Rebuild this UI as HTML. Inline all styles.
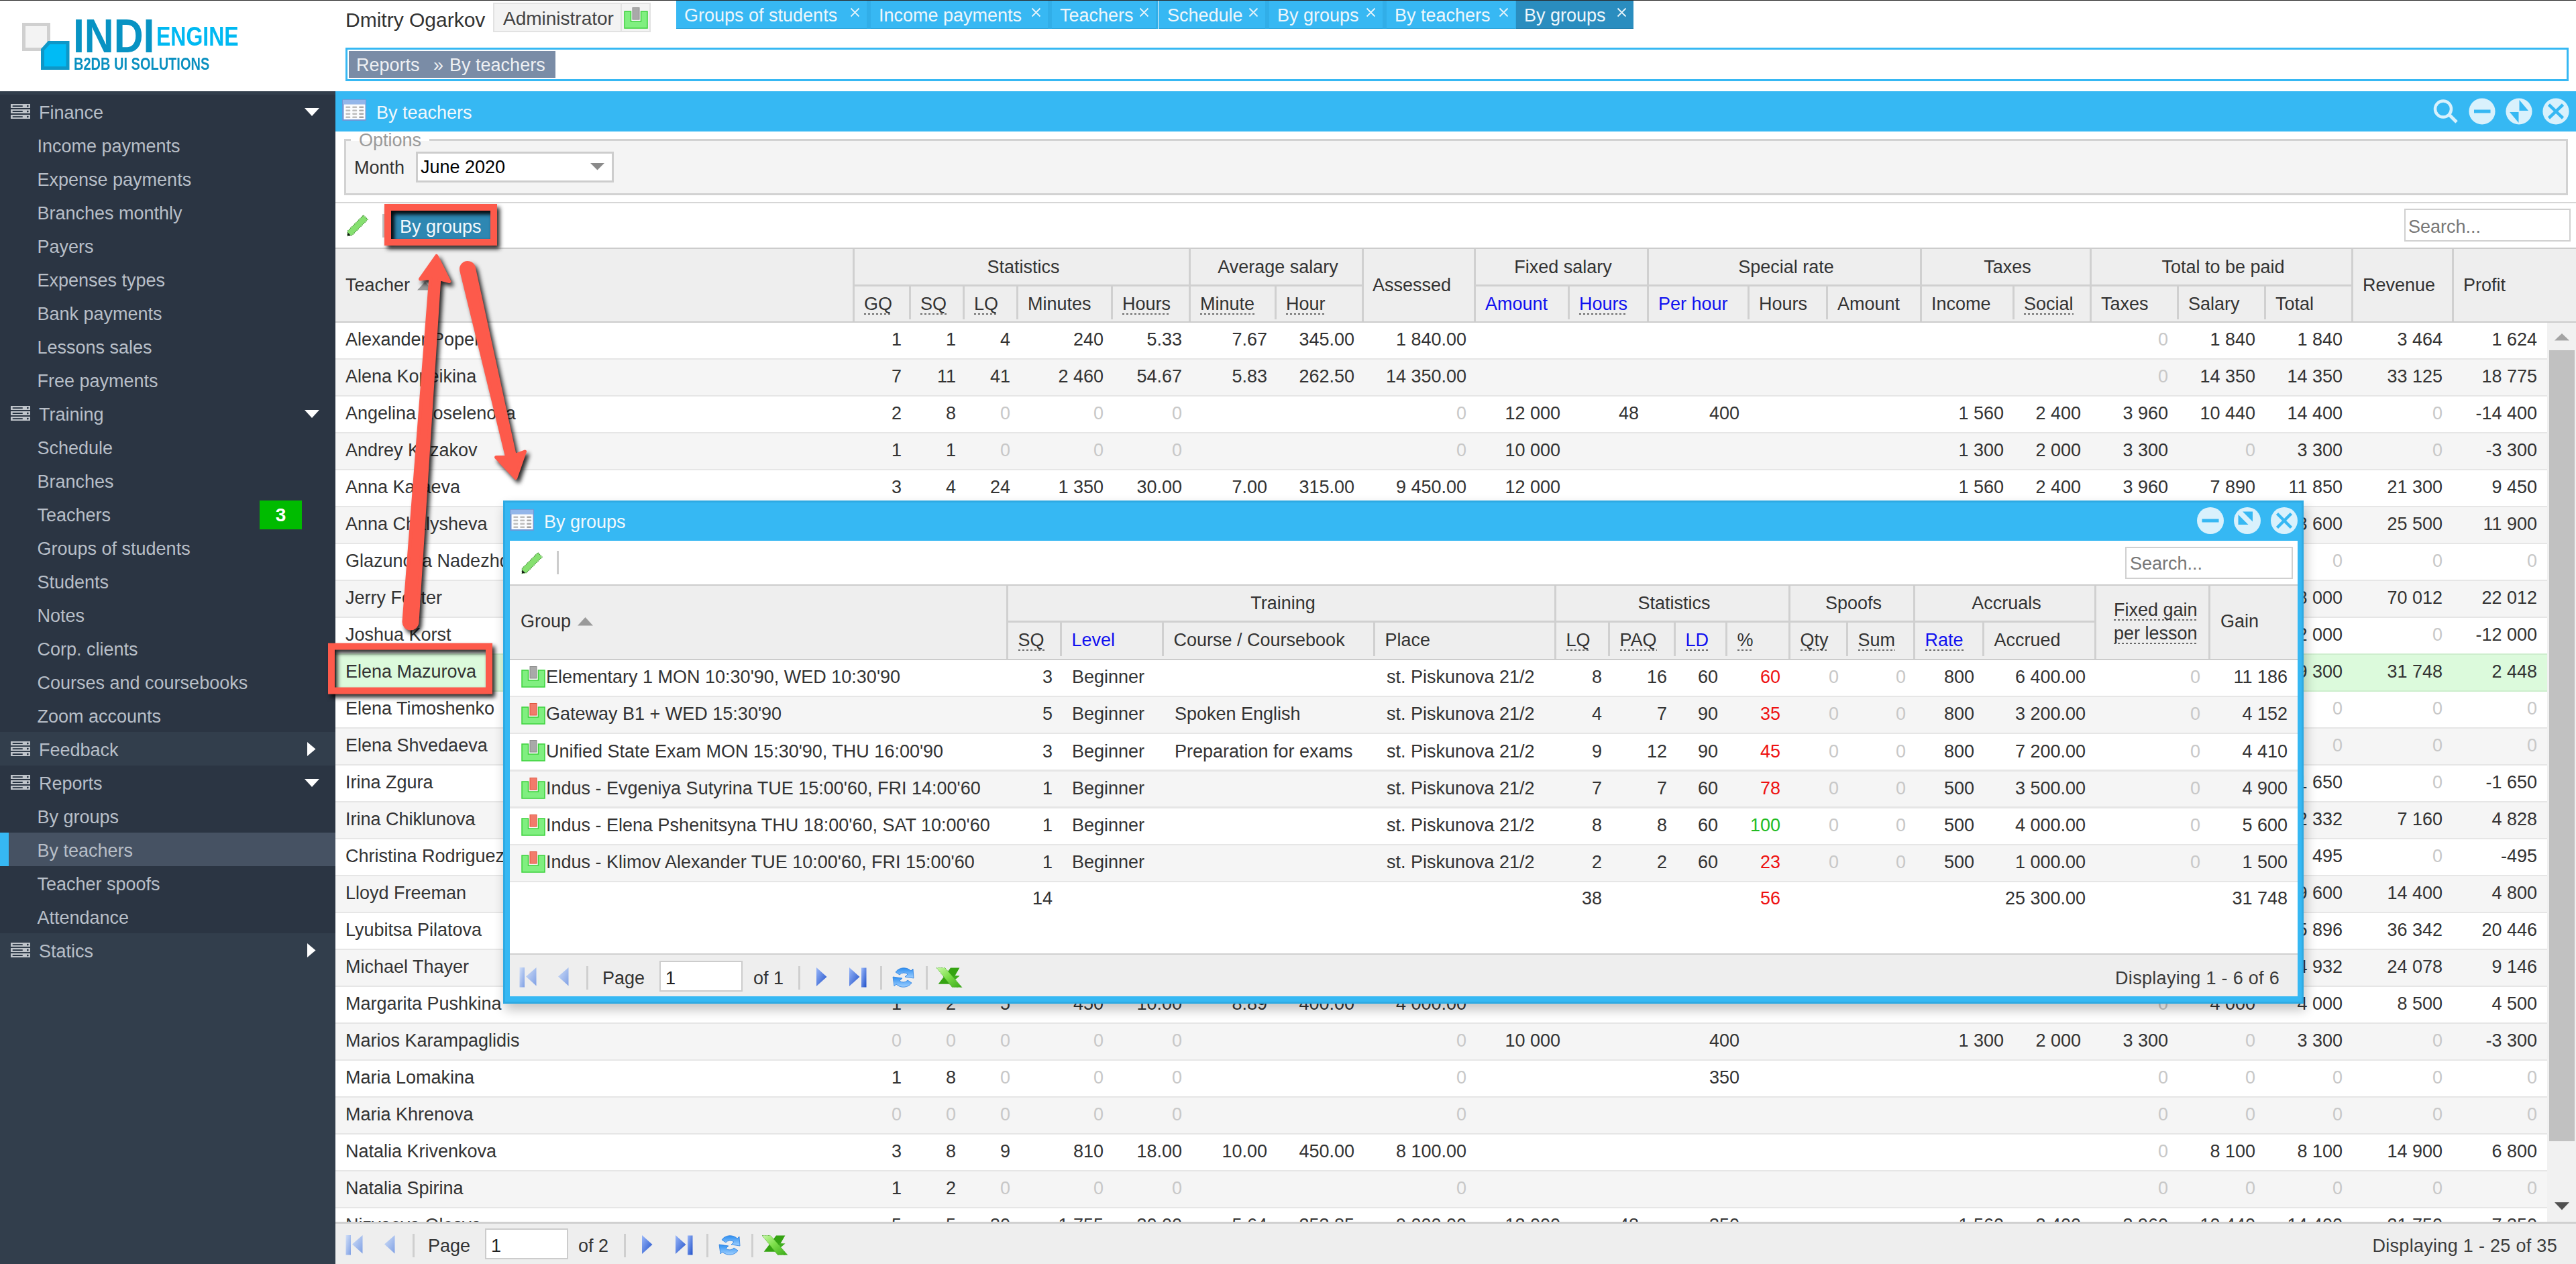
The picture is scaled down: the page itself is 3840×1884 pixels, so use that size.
<!DOCTYPE html><html><head><meta charset="utf-8"><style>
html,body{margin:0;padding:0;}
body{width:3840px;height:1884px;overflow:hidden;position:relative;background:#fff;font-family:"Liberation Sans", sans-serif;font-size:27px;color:#333;}
.t{position:absolute;white-space:pre;}
.b{position:absolute;box-sizing:border-box;}
.u{background:linear-gradient(90deg,#6a6a6a 50%,transparent 50%) 0 100%/6px 2px repeat-x;padding-bottom:0.5px;}
svg{position:absolute;overflow:visible;}
</style></head><body>
<div class="b" style="left:0px;top:0px;width:3840px;height:1px;background:#2a2a2a"></div>
<svg style="left:0;top:0" width="400" height="136">
<rect x="35.5" y="36.5" width="37" height="37" fill="#f3f3f3" stroke="#d0d0d0" stroke-width="5"/>
<path d="M63.5 104 V74 L73 63.5 H101 V101.5 H63.5 Z" fill="#00bbf5" stroke="#0e97c7" stroke-width="5"/>
</svg>
<div class="t" style="left:109px;top:18px;font-size:71px;line-height:71px;color:#0893c3;font-weight:bold;transform:scaleX(0.855);transform-origin:0 0">INDI</div>
<div class="t" style="left:233px;top:34px;font-size:41px;line-height:41px;color:#00b9f2;font-weight:bold;transform:scaleX(0.78);transform-origin:0 0">ENGINE</div>
<div class="t" style="left:110px;top:83px;font-size:25px;line-height:25px;color:#0a90c0;font-weight:bold;transform:scaleX(0.80);transform-origin:0 0">B2DB UI SOLUTIONS</div>
<div class="t " style="left:515px;top:14.6px;color:#333;font-size:30px;line-height:30px;">Dmitry Ogarkov</div>
<div class="b" style="left:735px;top:4px;width:235px;height:44px;background:#f3f3f3;border:2px solid #e2e2e2"></div>
<div class="b" style="left:925px;top:6px;width:2px;height:40px;background:#e2e2e2"></div>
<div class="t " style="left:750px;top:14.3px;color:#444;font-size:28px;line-height:28px;">Administrator</div>
<svg style="left:930px;top:10.5px" width="36" height="32" viewBox="0 0 36 32">
<path d="M1 6 H10.5 V21 H25.5 V6 H35 V31 H1 Z" fill="#80ef80" stroke="#3cd23c" stroke-width="1.5"/>
<rect x="13" y="0.5" width="10" height="17.5" fill="#a9a9a9" stroke="#8a8a8a" stroke-width="1"/>
</svg>
<div class="b" style="left:1008px;top:1px;width:284px;height:42px;background:#37b8f3;border-bottom:1px solid #2fa6dd"></div>
<div class="b" style="left:1292px;top:1px;width:6px;height:42px;background:#31aee8"></div>
<div class="t " style="left:1020px;top:10.1px;color:#eef6fb;font-size:27px;line-height:27px;">Groups of students</div>
<svg style="left:1267px;top:11px" width="15" height="15"><path d="M1.5 1.5 L13.5 13.5 M13.5 1.5 L1.5 13.5" stroke="#e6f4fb" stroke-width="1.8"/></svg>
<div class="b" style="left:1298px;top:1px;width:264px;height:42px;background:#37b8f3;border-bottom:1px solid #2fa6dd"></div>
<div class="b" style="left:1562px;top:1px;width:6px;height:42px;background:#31aee8"></div>
<div class="t " style="left:1310px;top:10.1px;color:#eef6fb;font-size:27px;line-height:27px;">Income payments</div>
<svg style="left:1537px;top:11px" width="15" height="15"><path d="M1.5 1.5 L13.5 13.5 M13.5 1.5 L1.5 13.5" stroke="#e6f4fb" stroke-width="1.8"/></svg>
<div class="b" style="left:1568px;top:1px;width:155px;height:42px;background:#37b8f3;border-bottom:1px solid #2fa6dd"></div>
<div class="b" style="left:1723px;top:1px;width:5px;height:42px;background:#31aee8"></div>
<div class="t " style="left:1580px;top:10.1px;color:#eef6fb;font-size:27px;line-height:27px;">Teachers</div>
<svg style="left:1698px;top:11px" width="15" height="15"><path d="M1.5 1.5 L13.5 13.5 M13.5 1.5 L1.5 13.5" stroke="#e6f4fb" stroke-width="1.8"/></svg>
<div class="b" style="left:1728px;top:1px;width:158px;height:42px;background:#37b8f3;border-bottom:1px solid #2fa6dd"></div>
<div class="b" style="left:1886px;top:1px;width:6px;height:42px;background:#31aee8"></div>
<div class="t " style="left:1740px;top:10.1px;color:#eef6fb;font-size:27px;line-height:27px;">Schedule</div>
<svg style="left:1861px;top:11px" width="15" height="15"><path d="M1.5 1.5 L13.5 13.5 M13.5 1.5 L1.5 13.5" stroke="#e6f4fb" stroke-width="1.8"/></svg>
<div class="b" style="left:1892px;top:1px;width:169px;height:42px;background:#37b8f3;border-bottom:1px solid #2fa6dd"></div>
<div class="b" style="left:2061px;top:1px;width:6px;height:42px;background:#31aee8"></div>
<div class="t " style="left:1904px;top:10.1px;color:#eef6fb;font-size:27px;line-height:27px;">By groups</div>
<svg style="left:2036px;top:11px" width="15" height="15"><path d="M1.5 1.5 L13.5 13.5 M13.5 1.5 L1.5 13.5" stroke="#e6f4fb" stroke-width="1.8"/></svg>
<div class="b" style="left:2067px;top:1px;width:192px;height:42px;background:#37b8f3;border-bottom:1px solid #2fa6dd"></div>
<div class="b" style="left:2259px;top:1px;width:1px;height:42px;background:#31aee8"></div>
<div class="t " style="left:2079px;top:10.1px;color:#eef6fb;font-size:27px;line-height:27px;">By teachers</div>
<svg style="left:2234px;top:11px" width="15" height="15"><path d="M1.5 1.5 L13.5 13.5 M13.5 1.5 L1.5 13.5" stroke="#e6f4fb" stroke-width="1.8"/></svg>
<div class="b" style="left:2260px;top:1px;width:175px;height:42px;background:#2a8dbf;border-bottom:1px solid #2680ae"></div>
<div class="t " style="left:2272px;top:10.1px;color:#eef6fb;font-size:27px;line-height:27px;">By groups</div>
<svg style="left:2410px;top:11px" width="15" height="15"><path d="M1.5 1.5 L13.5 13.5 M13.5 1.5 L1.5 13.5" stroke="#e6f4fb" stroke-width="1.8"/></svg>
<div class="b" style="left:1723px;top:1px;width:5px;height:42px;background:#31aee8"></div>
<div class="b" style="left:1726px;top:1px;width:1px;height:42px;background:#ffffff"></div>
<div class="b" style="left:515px;top:71px;width:3314px;height:50px;border:3px solid #36b8f3;background:#fff"></div>
<div class="b" style="left:520px;top:76px;width:308px;height:40px;background:#7a8ca6"></div>
<div class="t " style="left:531px;top:84.1px;color:#eef0f3;font-size:27px;line-height:27px;">Reports<span style="margin-left:20.5px">»</span><span style="margin-left:9px">By teachers</span></div>
<div class="b" style="left:0px;top:136px;width:500px;height:1748px;background:#323e4c"></div>
<div class="b" style="left:0px;top:141px;width:500px;height:450px;background:#2b3543"></div>
<div class="b" style="left:0px;top:591px;width:500px;height:500px;background:#2b3543"></div>
<div class="b" style="left:0px;top:1141px;width:500px;height:250px;background:#2b3543"></div>
<div class="b" style="left:0px;top:1241px;width:500px;height:50px;background:#465263"></div>
<div class="b" style="left:0px;top:1241px;width:13px;height:50px;background:#36b8f3"></div>
<svg style="left:16px;top:155px" width="29" height="22" viewBox="0 0 29 22">
<g fill="#bfc4ca"><rect x="0" y="0" width="29" height="6"/><rect x="0" y="8" width="29" height="6"/><rect x="0" y="16" width="29" height="6"/></g>
<g fill="#1c2939"><rect x="2.5" y="2.2" width="15.5" height="1.8" rx="0.9"/><rect x="2.5" y="10.2" width="15.5" height="1.8" rx="0.9"/><rect x="2.5" y="18.2" width="15.5" height="1.8" rx="0.9"/>
<circle cx="25.3" cy="3.1" r="1.4"/><circle cx="25.3" cy="11.1" r="1.4"/><circle cx="25.3" cy="19.1" r="1.4"/></g>
</svg>
<div class="t " style="left:58px;top:155.1px;color:#b8bfc8;font-size:27px;line-height:27px;">Finance</div>
<svg style="left:454px;top:161px" width="22" height="12"><path d="M0 0 H22 L11 12 Z" fill="#fff"/></svg>
<div class="t " style="left:55.5px;top:205.1px;color:#b8bfc8;font-size:27px;line-height:27px;">Income payments</div>
<div class="t " style="left:55.5px;top:255.1px;color:#b8bfc8;font-size:27px;line-height:27px;">Expense payments</div>
<div class="t " style="left:55.5px;top:305.1px;color:#b8bfc8;font-size:27px;line-height:27px;">Branches monthly</div>
<div class="t " style="left:55.5px;top:355.1px;color:#b8bfc8;font-size:27px;line-height:27px;">Payers</div>
<div class="t " style="left:55.5px;top:405.1px;color:#b8bfc8;font-size:27px;line-height:27px;">Expenses types</div>
<div class="t " style="left:55.5px;top:455.1px;color:#b8bfc8;font-size:27px;line-height:27px;">Bank payments</div>
<div class="t " style="left:55.5px;top:505.1px;color:#b8bfc8;font-size:27px;line-height:27px;">Lessons sales</div>
<div class="t " style="left:55.5px;top:555.1px;color:#b8bfc8;font-size:27px;line-height:27px;">Free payments</div>
<svg style="left:16px;top:605px" width="29" height="22" viewBox="0 0 29 22">
<g fill="#bfc4ca"><rect x="0" y="0" width="29" height="6"/><rect x="0" y="8" width="29" height="6"/><rect x="0" y="16" width="29" height="6"/></g>
<g fill="#1c2939"><rect x="2.5" y="2.2" width="15.5" height="1.8" rx="0.9"/><rect x="2.5" y="10.2" width="15.5" height="1.8" rx="0.9"/><rect x="2.5" y="18.2" width="15.5" height="1.8" rx="0.9"/>
<circle cx="25.3" cy="3.1" r="1.4"/><circle cx="25.3" cy="11.1" r="1.4"/><circle cx="25.3" cy="19.1" r="1.4"/></g>
</svg>
<div class="t " style="left:58px;top:605.1px;color:#b8bfc8;font-size:27px;line-height:27px;">Training</div>
<svg style="left:454px;top:611px" width="22" height="12"><path d="M0 0 H22 L11 12 Z" fill="#fff"/></svg>
<div class="t " style="left:55.5px;top:655.1px;color:#b8bfc8;font-size:27px;line-height:27px;">Schedule</div>
<div class="t " style="left:55.5px;top:705.1px;color:#b8bfc8;font-size:27px;line-height:27px;">Branches</div>
<div class="t " style="left:55.5px;top:755.1px;color:#b8bfc8;font-size:27px;line-height:27px;">Teachers</div>
<div class="b" style="left:387px;top:746px;width:63px;height:43px;background:#00bb00"></div>
<div class="t" style="left:387px;width:63px;text-align:center;top:751px;font-size:28px;line-height:33px;color:#fff;font-weight:bold">3</div>
<div class="t " style="left:55.5px;top:805.1px;color:#b8bfc8;font-size:27px;line-height:27px;">Groups of students</div>
<div class="t " style="left:55.5px;top:855.1px;color:#b8bfc8;font-size:27px;line-height:27px;">Students</div>
<div class="t " style="left:55.5px;top:905.1px;color:#b8bfc8;font-size:27px;line-height:27px;">Notes</div>
<div class="t " style="left:55.5px;top:955.1px;color:#b8bfc8;font-size:27px;line-height:27px;">Corp. clients</div>
<div class="t " style="left:55.5px;top:1005.1px;color:#b8bfc8;font-size:27px;line-height:27px;">Courses and coursebooks</div>
<div class="t " style="left:55.5px;top:1055.1px;color:#b8bfc8;font-size:27px;line-height:27px;">Zoom accounts</div>
<svg style="left:16px;top:1105px" width="29" height="22" viewBox="0 0 29 22">
<g fill="#bfc4ca"><rect x="0" y="0" width="29" height="6"/><rect x="0" y="8" width="29" height="6"/><rect x="0" y="16" width="29" height="6"/></g>
<g fill="#1c2939"><rect x="2.5" y="2.2" width="15.5" height="1.8" rx="0.9"/><rect x="2.5" y="10.2" width="15.5" height="1.8" rx="0.9"/><rect x="2.5" y="18.2" width="15.5" height="1.8" rx="0.9"/>
<circle cx="25.3" cy="3.1" r="1.4"/><circle cx="25.3" cy="11.1" r="1.4"/><circle cx="25.3" cy="19.1" r="1.4"/></g>
</svg>
<div class="t " style="left:58px;top:1105.1px;color:#b8bfc8;font-size:27px;line-height:27px;">Feedback</div>
<svg style="left:458px;top:1106px" width="13" height="21"><path d="M0 0 V21 L12.5 10.5 Z" fill="#fff"/></svg>
<svg style="left:16px;top:1155px" width="29" height="22" viewBox="0 0 29 22">
<g fill="#bfc4ca"><rect x="0" y="0" width="29" height="6"/><rect x="0" y="8" width="29" height="6"/><rect x="0" y="16" width="29" height="6"/></g>
<g fill="#1c2939"><rect x="2.5" y="2.2" width="15.5" height="1.8" rx="0.9"/><rect x="2.5" y="10.2" width="15.5" height="1.8" rx="0.9"/><rect x="2.5" y="18.2" width="15.5" height="1.8" rx="0.9"/>
<circle cx="25.3" cy="3.1" r="1.4"/><circle cx="25.3" cy="11.1" r="1.4"/><circle cx="25.3" cy="19.1" r="1.4"/></g>
</svg>
<div class="t " style="left:58px;top:1155.1px;color:#b8bfc8;font-size:27px;line-height:27px;">Reports</div>
<svg style="left:454px;top:1161px" width="22" height="12"><path d="M0 0 H22 L11 12 Z" fill="#fff"/></svg>
<div class="t " style="left:55.5px;top:1205.1px;color:#b8bfc8;font-size:27px;line-height:27px;">By groups</div>
<div class="t " style="left:55.5px;top:1255.1px;color:#b8bfc8;font-size:27px;line-height:27px;">By teachers</div>
<div class="t " style="left:55.5px;top:1305.1px;color:#b8bfc8;font-size:27px;line-height:27px;">Teacher spoofs</div>
<div class="t " style="left:55.5px;top:1355.1px;color:#b8bfc8;font-size:27px;line-height:27px;">Attendance</div>
<svg style="left:16px;top:1405px" width="29" height="22" viewBox="0 0 29 22">
<g fill="#bfc4ca"><rect x="0" y="0" width="29" height="6"/><rect x="0" y="8" width="29" height="6"/><rect x="0" y="16" width="29" height="6"/></g>
<g fill="#1c2939"><rect x="2.5" y="2.2" width="15.5" height="1.8" rx="0.9"/><rect x="2.5" y="10.2" width="15.5" height="1.8" rx="0.9"/><rect x="2.5" y="18.2" width="15.5" height="1.8" rx="0.9"/>
<circle cx="25.3" cy="3.1" r="1.4"/><circle cx="25.3" cy="11.1" r="1.4"/><circle cx="25.3" cy="19.1" r="1.4"/></g>
</svg>
<div class="t " style="left:58px;top:1405.1px;color:#b8bfc8;font-size:27px;line-height:27px;">Statics</div>
<svg style="left:458px;top:1406px" width="13" height="21"><path d="M0 0 V21 L12.5 10.5 Z" fill="#fff"/></svg>
<div class="b" style="left:500px;top:136px;width:3340px;height:60px;background:#36b8f3"></div>
<svg style="left:510px;top:148px" width="37" height="33" viewBox="0 0 37 33">
<rect x="0" y="0" width="36" height="32" rx="1" fill="#6f98d6"/>
<rect x="1" y="0.8" width="34" height="6.5" fill="#93b6ea"/>
<rect x="2.5" y="7.5" width="32" height="22.5" fill="#fbfcfe"/>
<g fill="#bdbdbd"><rect x="5.3" y="10.5" width="7" height="2.5" rx="1"/><rect x="15.2" y="10.5" width="7" height="2.5" rx="1"/><rect x="25.2" y="10.5" width="7" height="2.5" rx="1" fill="#aaa"/>
<rect x="5.3" y="15.4" width="7" height="2.5" rx="1"/><rect x="15.2" y="15.4" width="7" height="2.5" rx="1"/><rect x="25.2" y="15.4" width="7" height="2.5" rx="1" fill="#aaa"/>
<rect x="5.3" y="20.4" width="7" height="2.5" rx="1"/><rect x="15.2" y="20.4" width="7" height="2.5" rx="1"/><rect x="25.2" y="20.4" width="7" height="2.5" rx="1" fill="#aaa"/>
<rect x="5.3" y="25.4" width="7" height="2.5" rx="1"/><rect x="15.2" y="25.4" width="7" height="2.5" rx="1"/><rect x="25.2" y="25.4" width="7" height="2.5" rx="1" fill="#a0a0a0"/></g>
</svg>
<div class="t " style="left:561px;top:155.1px;color:#f2f8fc;font-size:27px;line-height:27px;">By teachers</div>
<svg style="left:3600px;top:136px" width="240" height="60">
<circle cx="42" cy="26.5" r="12" fill="none" stroke="#d9f1fc" stroke-width="4.5"/>
<path d="M51 35 L62 46" stroke="#d9f1fc" stroke-width="5" stroke-linecap="butt"/>
<circle cx="100" cy="30" r="19.6" fill="#d9f1fc"/><rect x="88" y="27.5" width="24.5" height="5" fill="#36b8f3"/>
<circle cx="155" cy="30" r="19.6" fill="#d9f1fc"/><path d="M145 8 V44 M140 0" stroke="none"/>
<path d="M155.5 13 V29 H169 Z" fill="#36b8f3"/><path d="M154.5 47 V31 H141 Z" fill="#36b8f3"/>
<circle cx="210" cy="30" r="19.6" fill="#d9f1fc"/><path d="M199.5 20 L220.5 40 M220.5 20 L199.5 40" stroke="#36b8f3" stroke-width="4.5"/>
</svg>
<div class="b" style="left:513px;top:207px;width:3315px;height:84px;background:#f4f4f4;border:3px solid #d2d2d2"></div>
<div class="b" style="left:523px;top:205px;width:117px;height:5px;background:#fff"></div>
<div class="t " style="left:535px;top:196.1px;color:#9a9a9a;font-size:27px;line-height:27px;">Options</div>
<div class="t " style="left:528px;top:237.1px;color:#333;font-size:27px;line-height:27px;">Month</div>
<div class="b" style="left:620px;top:226px;width:295px;height:46px;background:#fff;border:3px solid #cdcdcd"></div>
<div class="t " style="left:627px;top:236.1px;color:#000;font-size:27px;line-height:27px;">June 2020</div>
<svg style="left:880px;top:243px" width="21" height="11"><path d="M0 0 H21 L10.5 10.5 Z" fill="#8a8a8a"/></svg>
<div class="b" style="left:500px;top:301px;width:3340px;height:2px;background:#d6d6d6"></div>
<svg style="left:516px;top:320px" width="34" height="33" viewBox="0 0 34 33">
<path d="M25.8 0.8 L32.2 7.2 L8.7 30.7 L2 31.5 L2.3 24.3 Z" fill="#86e070" stroke="#4f9e40" stroke-width="1.3" stroke-dasharray="1.6 1.2" stroke-linejoin="round"/>
<path d="M2 31.6 L2.4 26.5 L6.8 31 Z" fill="#111"/>
</svg>
<div class="b" style="left:570px;top:319px;width:2.5px;height:35px;background:#c4c4c4"></div>
<div class="b" style="left:3584px;top:311px;width:248px;height:49px;background:#fff;border:2px solid #d0d0d0"></div>
<div class="t " style="left:3590px;top:325.1px;color:#777;font-size:27px;line-height:27px;">Search...</div>
<div class="b" style="left:500px;top:369px;width:3340px;height:2px;background:#cccccc"></div>
<div class="b" style="left:500px;top:371px;width:3340px;height:108px;background:#eeeeee"></div>
<div class="b" style="left:500px;top:479px;width:3340px;height:2px;background:#cccccc"></div>
<div class="b" style="left:1271px;top:371px;width:2.5px;height:108px;background:#d0d0d0"></div>
<div class="b" style="left:1772px;top:371px;width:2.5px;height:108px;background:#d0d0d0"></div>
<div class="b" style="left:2030px;top:371px;width:2.5px;height:108px;background:#d0d0d0"></div>
<div class="b" style="left:2197px;top:371px;width:2.5px;height:108px;background:#d0d0d0"></div>
<div class="b" style="left:2455px;top:371px;width:2.5px;height:108px;background:#d0d0d0"></div>
<div class="b" style="left:2862px;top:371px;width:2.5px;height:108px;background:#d0d0d0"></div>
<div class="b" style="left:3115px;top:371px;width:2.5px;height:108px;background:#d0d0d0"></div>
<div class="b" style="left:3505px;top:371px;width:2.5px;height:108px;background:#d0d0d0"></div>
<div class="b" style="left:3655px;top:371px;width:2.5px;height:108px;background:#d0d0d0"></div>
<div class="b" style="left:1355px;top:427px;width:2.5px;height:49px;background:#d0d0d0"></div>
<div class="b" style="left:1435px;top:427px;width:2.5px;height:49px;background:#d0d0d0"></div>
<div class="b" style="left:1515px;top:427px;width:2.5px;height:49px;background:#d0d0d0"></div>
<div class="b" style="left:1656px;top:427px;width:2.5px;height:49px;background:#d0d0d0"></div>
<div class="b" style="left:1900px;top:427px;width:2.5px;height:49px;background:#d0d0d0"></div>
<div class="b" style="left:2337px;top:427px;width:2.5px;height:49px;background:#d0d0d0"></div>
<div class="b" style="left:2605px;top:427px;width:2.5px;height:49px;background:#d0d0d0"></div>
<div class="b" style="left:2722px;top:427px;width:2.5px;height:49px;background:#d0d0d0"></div>
<div class="b" style="left:3000px;top:427px;width:2.5px;height:49px;background:#d0d0d0"></div>
<div class="b" style="left:3245px;top:427px;width:2.5px;height:49px;background:#d0d0d0"></div>
<div class="b" style="left:3375px;top:427px;width:2.5px;height:49px;background:#d0d0d0"></div>
<div class="b" style="left:1272px;top:424px;width:501px;height:3px;background:#d0d0d0"></div>
<div class="b" style="left:1773px;top:424px;width:258px;height:3px;background:#d0d0d0"></div>
<div class="b" style="left:2198px;top:424px;width:258px;height:3px;background:#d0d0d0"></div>
<div class="b" style="left:2456px;top:424px;width:407px;height:3px;background:#d0d0d0"></div>
<div class="b" style="left:2863px;top:424px;width:253px;height:3px;background:#d0d0d0"></div>
<div class="b" style="left:3116px;top:424px;width:390px;height:3px;background:#d0d0d0"></div>
<div class="t " style="left:515px;top:412.1px;color:#333;font-size:27px;line-height:27px;">Teacher</div>
<svg style="left:622px;top:420px" width="24" height="13"><path d="M0 12.5 H23 L11.5 0 Z" fill="#999"/></svg>
<div class="t" style="left:1225.5px;width:600px;text-align:center;top:385.1px;color:#333;font-size:27px;line-height:27px;">Statistics</div>
<div class="t" style="left:1605.0px;width:600px;text-align:center;top:385.1px;color:#333;font-size:27px;line-height:27px;">Average salary</div>
<div class="t" style="left:2030.0px;width:600px;text-align:center;top:385.1px;color:#333;font-size:27px;line-height:27px;">Fixed salary</div>
<div class="t" style="left:2362.5px;width:600px;text-align:center;top:385.1px;color:#333;font-size:27px;line-height:27px;">Special rate</div>
<div class="t" style="left:2692.5px;width:600px;text-align:center;top:385.1px;color:#333;font-size:27px;line-height:27px;">Taxes</div>
<div class="t" style="left:3014.0px;width:600px;text-align:center;top:385.1px;color:#333;font-size:27px;line-height:27px;">Total to be paid</div>
<div class="t " style="left:2046px;top:412.1px;color:#333;font-size:27px;line-height:27px;">Assessed</div>
<div class="t " style="left:3522px;top:412.1px;color:#333;font-size:27px;line-height:27px;">Revenue</div>
<div class="t " style="left:3672px;top:412.1px;color:#333;font-size:27px;line-height:27px;">Profit</div>
<div class="t " style="left:1288px;top:440.1px;color:#333;font-size:27px;line-height:27px;"><span class="u">GQ</span></div>
<div class="t " style="left:1372px;top:440.1px;color:#333;font-size:27px;line-height:27px;"><span class="u">SQ</span></div>
<div class="t " style="left:1452px;top:440.1px;color:#333;font-size:27px;line-height:27px;"><span class="u">LQ</span></div>
<div class="t " style="left:1532px;top:440.1px;color:#333;font-size:27px;line-height:27px;"><span class="">Minutes</span></div>
<div class="t " style="left:1673px;top:440.1px;color:#333;font-size:27px;line-height:27px;"><span class="u">Hours</span></div>
<div class="t " style="left:1789px;top:440.1px;color:#333;font-size:27px;line-height:27px;"><span class="u">Minute</span></div>
<div class="t " style="left:1917px;top:440.1px;color:#333;font-size:27px;line-height:27px;"><span class="u">Hour</span></div>
<div class="t " style="left:2214px;top:440.1px;color:#1010f0;font-size:27px;line-height:27px;"><span class="">Amount</span></div>
<div class="t " style="left:2354px;top:440.1px;color:#1010f0;font-size:27px;line-height:27px;"><span class="u">Hours</span></div>
<div class="t " style="left:2472px;top:440.1px;color:#1010f0;font-size:27px;line-height:27px;"><span class="">Per hour</span></div>
<div class="t " style="left:2622px;top:440.1px;color:#333;font-size:27px;line-height:27px;"><span class="">Hours</span></div>
<div class="t " style="left:2739px;top:440.1px;color:#333;font-size:27px;line-height:27px;"><span class="">Amount</span></div>
<div class="t " style="left:2879px;top:440.1px;color:#333;font-size:27px;line-height:27px;"><span class="">Income</span></div>
<div class="t " style="left:3017px;top:440.1px;color:#333;font-size:27px;line-height:27px;"><span class="u">Social</span></div>
<div class="t " style="left:3132px;top:440.1px;color:#333;font-size:27px;line-height:27px;"><span class="">Taxes</span></div>
<div class="t " style="left:3262px;top:440.1px;color:#333;font-size:27px;line-height:27px;"><span class="">Salary</span></div>
<div class="t " style="left:3392px;top:440.1px;color:#333;font-size:27px;line-height:27px;"><span class="">Total</span></div>
<div class="b" style="left:500px;top:481px;width:3297px;height:1340px;overflow:hidden">
<div class="b" style="left:0;top:0px;width:3297px;height:53px;background:#ffffff"></div>
<div class="b" style="left:0;top:52.6px;width:3297px;height:2.6px;background:#e6e6e6"></div>
<div class="t" style="left:15px;top:12.1px;line-height:27px">Alexander Popel</div>
<div class="t" style="right:2453px;top:12.1px;line-height:27px;color:#333">1</div>
<div class="t" style="right:2372px;top:12.1px;line-height:27px;color:#333">1</div>
<div class="t" style="right:2291px;top:12.1px;line-height:27px;color:#333">4</div>
<div class="t" style="right:2152px;top:12.1px;line-height:27px;color:#333">240</div>
<div class="t" style="right:2035px;top:12.1px;line-height:27px;color:#333">5.33</div>
<div class="t" style="right:1908px;top:12.1px;line-height:27px;color:#333">7.67</div>
<div class="t" style="right:1778px;top:12.1px;line-height:27px;color:#333">345.00</div>
<div class="t" style="right:1611px;top:12.1px;line-height:27px;color:#333">1 840.00</div>
<div class="t" style="right:565px;top:12.1px;line-height:27px;color:#c8c8c8">0</div>
<div class="t" style="right:435px;top:12.1px;line-height:27px;color:#333">1 840</div>
<div class="t" style="right:305px;top:12.1px;line-height:27px;color:#333">1 840</div>
<div class="t" style="right:156px;top:12.1px;line-height:27px;color:#333">3 464</div>
<div class="t" style="right:15px;top:12.1px;line-height:27px;color:#333">1 624</div>
<div class="b" style="left:0;top:55px;width:3297px;height:53px;background:#f5f5f5"></div>
<div class="b" style="left:0;top:107.6px;width:3297px;height:2.6px;background:#e6e6e6"></div>
<div class="t" style="left:15px;top:67.1px;line-height:27px">Alena Kopeikina</div>
<div class="t" style="right:2453px;top:67.1px;line-height:27px;color:#333">7</div>
<div class="t" style="right:2372px;top:67.1px;line-height:27px;color:#333">11</div>
<div class="t" style="right:2291px;top:67.1px;line-height:27px;color:#333">41</div>
<div class="t" style="right:2152px;top:67.1px;line-height:27px;color:#333">2 460</div>
<div class="t" style="right:2035px;top:67.1px;line-height:27px;color:#333">54.67</div>
<div class="t" style="right:1908px;top:67.1px;line-height:27px;color:#333">5.83</div>
<div class="t" style="right:1778px;top:67.1px;line-height:27px;color:#333">262.50</div>
<div class="t" style="right:1611px;top:67.1px;line-height:27px;color:#333">14 350.00</div>
<div class="t" style="right:565px;top:67.1px;line-height:27px;color:#c8c8c8">0</div>
<div class="t" style="right:435px;top:67.1px;line-height:27px;color:#333">14 350</div>
<div class="t" style="right:305px;top:67.1px;line-height:27px;color:#333">14 350</div>
<div class="t" style="right:156px;top:67.1px;line-height:27px;color:#333">33 125</div>
<div class="t" style="right:15px;top:67.1px;line-height:27px;color:#333">18 775</div>
<div class="b" style="left:0;top:110px;width:3297px;height:53px;background:#ffffff"></div>
<div class="b" style="left:0;top:162.6px;width:3297px;height:2.6px;background:#e6e6e6"></div>
<div class="t" style="left:15px;top:122.1px;line-height:27px">Angelina Koselenova</div>
<div class="t" style="right:2453px;top:122.1px;line-height:27px;color:#333">2</div>
<div class="t" style="right:2372px;top:122.1px;line-height:27px;color:#333">8</div>
<div class="t" style="right:2291px;top:122.1px;line-height:27px;color:#c8c8c8">0</div>
<div class="t" style="right:2152px;top:122.1px;line-height:27px;color:#c8c8c8">0</div>
<div class="t" style="right:2035px;top:122.1px;line-height:27px;color:#c8c8c8">0</div>
<div class="t" style="right:1611px;top:122.1px;line-height:27px;color:#c8c8c8">0</div>
<div class="t" style="right:1471px;top:122.1px;line-height:27px;color:#333">12 000</div>
<div class="t" style="right:1354px;top:122.1px;line-height:27px;color:#333">48</div>
<div class="t" style="right:1204px;top:122.1px;line-height:27px;color:#333">400</div>
<div class="t" style="right:810px;top:122.1px;line-height:27px;color:#333">1 560</div>
<div class="t" style="right:695px;top:122.1px;line-height:27px;color:#333">2 400</div>
<div class="t" style="right:565px;top:122.1px;line-height:27px;color:#333">3 960</div>
<div class="t" style="right:435px;top:122.1px;line-height:27px;color:#333">10 440</div>
<div class="t" style="right:305px;top:122.1px;line-height:27px;color:#333">14 400</div>
<div class="t" style="right:156px;top:122.1px;line-height:27px;color:#c8c8c8">0</div>
<div class="t" style="right:15px;top:122.1px;line-height:27px;color:#333">-14 400</div>
<div class="b" style="left:0;top:165px;width:3297px;height:53px;background:#f5f5f5"></div>
<div class="b" style="left:0;top:217.6px;width:3297px;height:2.6px;background:#e6e6e6"></div>
<div class="t" style="left:15px;top:177.1px;line-height:27px">Andrey Kozakov</div>
<div class="t" style="right:2453px;top:177.1px;line-height:27px;color:#333">1</div>
<div class="t" style="right:2372px;top:177.1px;line-height:27px;color:#333">1</div>
<div class="t" style="right:2291px;top:177.1px;line-height:27px;color:#c8c8c8">0</div>
<div class="t" style="right:2152px;top:177.1px;line-height:27px;color:#c8c8c8">0</div>
<div class="t" style="right:2035px;top:177.1px;line-height:27px;color:#c8c8c8">0</div>
<div class="t" style="right:1611px;top:177.1px;line-height:27px;color:#c8c8c8">0</div>
<div class="t" style="right:1471px;top:177.1px;line-height:27px;color:#333">10 000</div>
<div class="t" style="right:810px;top:177.1px;line-height:27px;color:#333">1 300</div>
<div class="t" style="right:695px;top:177.1px;line-height:27px;color:#333">2 000</div>
<div class="t" style="right:565px;top:177.1px;line-height:27px;color:#333">3 300</div>
<div class="t" style="right:435px;top:177.1px;line-height:27px;color:#c8c8c8">0</div>
<div class="t" style="right:305px;top:177.1px;line-height:27px;color:#333">3 300</div>
<div class="t" style="right:156px;top:177.1px;line-height:27px;color:#c8c8c8">0</div>
<div class="t" style="right:15px;top:177.1px;line-height:27px;color:#333">-3 300</div>
<div class="b" style="left:0;top:220px;width:3297px;height:53px;background:#ffffff"></div>
<div class="b" style="left:0;top:272.6px;width:3297px;height:2.6px;background:#e6e6e6"></div>
<div class="t" style="left:15px;top:232.1px;line-height:27px">Anna Karaeva</div>
<div class="t" style="right:2453px;top:232.1px;line-height:27px;color:#333">3</div>
<div class="t" style="right:2372px;top:232.1px;line-height:27px;color:#333">4</div>
<div class="t" style="right:2291px;top:232.1px;line-height:27px;color:#333">24</div>
<div class="t" style="right:2152px;top:232.1px;line-height:27px;color:#333">1 350</div>
<div class="t" style="right:2035px;top:232.1px;line-height:27px;color:#333">30.00</div>
<div class="t" style="right:1908px;top:232.1px;line-height:27px;color:#333">7.00</div>
<div class="t" style="right:1778px;top:232.1px;line-height:27px;color:#333">315.00</div>
<div class="t" style="right:1611px;top:232.1px;line-height:27px;color:#333">9 450.00</div>
<div class="t" style="right:1471px;top:232.1px;line-height:27px;color:#333">12 000</div>
<div class="t" style="right:810px;top:232.1px;line-height:27px;color:#333">1 560</div>
<div class="t" style="right:695px;top:232.1px;line-height:27px;color:#333">2 400</div>
<div class="t" style="right:565px;top:232.1px;line-height:27px;color:#333">3 960</div>
<div class="t" style="right:435px;top:232.1px;line-height:27px;color:#333">7 890</div>
<div class="t" style="right:305px;top:232.1px;line-height:27px;color:#333">11 850</div>
<div class="t" style="right:156px;top:232.1px;line-height:27px;color:#333">21 300</div>
<div class="t" style="right:15px;top:232.1px;line-height:27px;color:#333">9 450</div>
<div class="b" style="left:0;top:275px;width:3297px;height:53px;background:#f5f5f5"></div>
<div class="b" style="left:0;top:327.6px;width:3297px;height:2.6px;background:#e6e6e6"></div>
<div class="t" style="left:15px;top:287.1px;line-height:27px">Anna Chalysheva</div>
<div class="t" style="right:305px;top:287.1px;line-height:27px;color:#333">13 600</div>
<div class="t" style="right:156px;top:287.1px;line-height:27px;color:#333">25 500</div>
<div class="t" style="right:15px;top:287.1px;line-height:27px;color:#333">11 900</div>
<div class="b" style="left:0;top:330px;width:3297px;height:53px;background:#ffffff"></div>
<div class="b" style="left:0;top:382.6px;width:3297px;height:2.6px;background:#e6e6e6"></div>
<div class="t" style="left:15px;top:342.1px;line-height:27px">Glazunova Nadezhda</div>
<div class="t" style="right:305px;top:342.1px;line-height:27px;color:#c8c8c8">0</div>
<div class="t" style="right:156px;top:342.1px;line-height:27px;color:#c8c8c8">0</div>
<div class="t" style="right:15px;top:342.1px;line-height:27px;color:#c8c8c8">0</div>
<div class="b" style="left:0;top:385px;width:3297px;height:53px;background:#f5f5f5"></div>
<div class="b" style="left:0;top:437.6px;width:3297px;height:2.6px;background:#e6e6e6"></div>
<div class="t" style="left:15px;top:397.1px;line-height:27px">Jerry Foster</div>
<div class="t" style="right:305px;top:397.1px;line-height:27px;color:#333">48 000</div>
<div class="t" style="right:156px;top:397.1px;line-height:27px;color:#333">70 012</div>
<div class="t" style="right:15px;top:397.1px;line-height:27px;color:#333">22 012</div>
<div class="b" style="left:0;top:440px;width:3297px;height:53px;background:#ffffff"></div>
<div class="b" style="left:0;top:492.6px;width:3297px;height:2.6px;background:#cdeecd"></div>
<div class="t" style="left:15px;top:452.1px;line-height:27px">Joshua Korst</div>
<div class="t" style="right:305px;top:452.1px;line-height:27px;color:#333">12 000</div>
<div class="t" style="right:156px;top:452.1px;line-height:27px;color:#c8c8c8">0</div>
<div class="t" style="right:15px;top:452.1px;line-height:27px;color:#333">-12 000</div>
<div class="b" style="left:0;top:495px;width:3297px;height:53px;background:#dcfadc"></div>
<div class="b" style="left:0;top:547.6px;width:3297px;height:2.6px;background:#cdeecd"></div>
<div class="t" style="left:15px;top:507.1px;line-height:27px">Elena Mazurova</div>
<div class="t" style="right:305px;top:507.1px;line-height:27px;color:#333">29 300</div>
<div class="t" style="right:156px;top:507.1px;line-height:27px;color:#333">31 748</div>
<div class="t" style="right:15px;top:507.1px;line-height:27px;color:#333">2 448</div>
<div class="b" style="left:0;top:550px;width:3297px;height:53px;background:#ffffff"></div>
<div class="b" style="left:0;top:602.6px;width:3297px;height:2.6px;background:#e6e6e6"></div>
<div class="t" style="left:15px;top:562.1px;line-height:27px">Elena Timoshenko</div>
<div class="t" style="right:305px;top:562.1px;line-height:27px;color:#c8c8c8">0</div>
<div class="t" style="right:156px;top:562.1px;line-height:27px;color:#c8c8c8">0</div>
<div class="t" style="right:15px;top:562.1px;line-height:27px;color:#c8c8c8">0</div>
<div class="b" style="left:0;top:605px;width:3297px;height:53px;background:#f5f5f5"></div>
<div class="b" style="left:0;top:657.6px;width:3297px;height:2.6px;background:#e6e6e6"></div>
<div class="t" style="left:15px;top:617.1px;line-height:27px">Elena Shvedaeva</div>
<div class="t" style="right:305px;top:617.1px;line-height:27px;color:#c8c8c8">0</div>
<div class="t" style="right:156px;top:617.1px;line-height:27px;color:#c8c8c8">0</div>
<div class="t" style="right:15px;top:617.1px;line-height:27px;color:#c8c8c8">0</div>
<div class="b" style="left:0;top:660px;width:3297px;height:53px;background:#ffffff"></div>
<div class="b" style="left:0;top:712.6px;width:3297px;height:2.6px;background:#e6e6e6"></div>
<div class="t" style="left:15px;top:672.1px;line-height:27px">Irina Zgura</div>
<div class="t" style="right:305px;top:672.1px;line-height:27px;color:#333">1 650</div>
<div class="t" style="right:156px;top:672.1px;line-height:27px;color:#c8c8c8">0</div>
<div class="t" style="right:15px;top:672.1px;line-height:27px;color:#333">-1 650</div>
<div class="b" style="left:0;top:715px;width:3297px;height:53px;background:#f5f5f5"></div>
<div class="b" style="left:0;top:767.6px;width:3297px;height:2.6px;background:#e6e6e6"></div>
<div class="t" style="left:15px;top:727.1px;line-height:27px">Irina Chiklunova</div>
<div class="t" style="right:305px;top:727.1px;line-height:27px;color:#333">2 332</div>
<div class="t" style="right:156px;top:727.1px;line-height:27px;color:#333">7 160</div>
<div class="t" style="right:15px;top:727.1px;line-height:27px;color:#333">4 828</div>
<div class="b" style="left:0;top:770px;width:3297px;height:53px;background:#ffffff"></div>
<div class="b" style="left:0;top:822.6px;width:3297px;height:2.6px;background:#e6e6e6"></div>
<div class="t" style="left:15px;top:782.1px;line-height:27px">Christina Rodriguez</div>
<div class="t" style="right:305px;top:782.1px;line-height:27px;color:#333">495</div>
<div class="t" style="right:156px;top:782.1px;line-height:27px;color:#c8c8c8">0</div>
<div class="t" style="right:15px;top:782.1px;line-height:27px;color:#333">-495</div>
<div class="b" style="left:0;top:825px;width:3297px;height:53px;background:#f5f5f5"></div>
<div class="b" style="left:0;top:877.6px;width:3297px;height:2.6px;background:#e6e6e6"></div>
<div class="t" style="left:15px;top:837.1px;line-height:27px">Lloyd Freeman</div>
<div class="t" style="right:305px;top:837.1px;line-height:27px;color:#333">9 600</div>
<div class="t" style="right:156px;top:837.1px;line-height:27px;color:#333">14 400</div>
<div class="t" style="right:15px;top:837.1px;line-height:27px;color:#333">4 800</div>
<div class="b" style="left:0;top:880px;width:3297px;height:53px;background:#ffffff"></div>
<div class="b" style="left:0;top:932.6px;width:3297px;height:2.6px;background:#e6e6e6"></div>
<div class="t" style="left:15px;top:892.1px;line-height:27px">Lyubitsa Pilatova</div>
<div class="t" style="right:305px;top:892.1px;line-height:27px;color:#333">15 896</div>
<div class="t" style="right:156px;top:892.1px;line-height:27px;color:#333">36 342</div>
<div class="t" style="right:15px;top:892.1px;line-height:27px;color:#333">20 446</div>
<div class="b" style="left:0;top:935px;width:3297px;height:53px;background:#f5f5f5"></div>
<div class="b" style="left:0;top:987.6px;width:3297px;height:2.6px;background:#e6e6e6"></div>
<div class="t" style="left:15px;top:947.1px;line-height:27px">Michael Thayer</div>
<div class="t" style="right:305px;top:947.1px;line-height:27px;color:#333">14 932</div>
<div class="t" style="right:156px;top:947.1px;line-height:27px;color:#333">24 078</div>
<div class="t" style="right:15px;top:947.1px;line-height:27px;color:#333">9 146</div>
<div class="b" style="left:0;top:990px;width:3297px;height:53px;background:#ffffff"></div>
<div class="b" style="left:0;top:1042.6px;width:3297px;height:2.6px;background:#e6e6e6"></div>
<div class="t" style="left:15px;top:1002.1px;line-height:27px">Margarita Pushkina</div>
<div class="t" style="right:2453px;top:1002.1px;line-height:27px;color:#333">1</div>
<div class="t" style="right:2372px;top:1002.1px;line-height:27px;color:#333">2</div>
<div class="t" style="right:2291px;top:1002.1px;line-height:27px;color:#333">5</div>
<div class="t" style="right:2152px;top:1002.1px;line-height:27px;color:#333">450</div>
<div class="t" style="right:2035px;top:1002.1px;line-height:27px;color:#333">10.00</div>
<div class="t" style="right:1908px;top:1002.1px;line-height:27px;color:#333">8.89</div>
<div class="t" style="right:1778px;top:1002.1px;line-height:27px;color:#333">400.00</div>
<div class="t" style="right:1611px;top:1002.1px;line-height:27px;color:#333">4 000.00</div>
<div class="t" style="right:565px;top:1002.1px;line-height:27px;color:#c8c8c8">0</div>
<div class="t" style="right:435px;top:1002.1px;line-height:27px;color:#333">4 000</div>
<div class="t" style="right:305px;top:1002.1px;line-height:27px;color:#333">4 000</div>
<div class="t" style="right:156px;top:1002.1px;line-height:27px;color:#333">8 500</div>
<div class="t" style="right:15px;top:1002.1px;line-height:27px;color:#333">4 500</div>
<div class="b" style="left:0;top:1045px;width:3297px;height:53px;background:#f5f5f5"></div>
<div class="b" style="left:0;top:1097.6px;width:3297px;height:2.6px;background:#e6e6e6"></div>
<div class="t" style="left:15px;top:1057.1px;line-height:27px">Marios Karampaglidis</div>
<div class="t" style="right:2453px;top:1057.1px;line-height:27px;color:#c8c8c8">0</div>
<div class="t" style="right:2372px;top:1057.1px;line-height:27px;color:#c8c8c8">0</div>
<div class="t" style="right:2291px;top:1057.1px;line-height:27px;color:#c8c8c8">0</div>
<div class="t" style="right:2152px;top:1057.1px;line-height:27px;color:#c8c8c8">0</div>
<div class="t" style="right:2035px;top:1057.1px;line-height:27px;color:#c8c8c8">0</div>
<div class="t" style="right:1611px;top:1057.1px;line-height:27px;color:#c8c8c8">0</div>
<div class="t" style="right:1471px;top:1057.1px;line-height:27px;color:#333">10 000</div>
<div class="t" style="right:1204px;top:1057.1px;line-height:27px;color:#333">400</div>
<div class="t" style="right:810px;top:1057.1px;line-height:27px;color:#333">1 300</div>
<div class="t" style="right:695px;top:1057.1px;line-height:27px;color:#333">2 000</div>
<div class="t" style="right:565px;top:1057.1px;line-height:27px;color:#333">3 300</div>
<div class="t" style="right:435px;top:1057.1px;line-height:27px;color:#c8c8c8">0</div>
<div class="t" style="right:305px;top:1057.1px;line-height:27px;color:#333">3 300</div>
<div class="t" style="right:156px;top:1057.1px;line-height:27px;color:#c8c8c8">0</div>
<div class="t" style="right:15px;top:1057.1px;line-height:27px;color:#333">-3 300</div>
<div class="b" style="left:0;top:1100px;width:3297px;height:53px;background:#ffffff"></div>
<div class="b" style="left:0;top:1152.6px;width:3297px;height:2.6px;background:#e6e6e6"></div>
<div class="t" style="left:15px;top:1112.1px;line-height:27px">Maria Lomakina</div>
<div class="t" style="right:2453px;top:1112.1px;line-height:27px;color:#333">1</div>
<div class="t" style="right:2372px;top:1112.1px;line-height:27px;color:#333">8</div>
<div class="t" style="right:2291px;top:1112.1px;line-height:27px;color:#c8c8c8">0</div>
<div class="t" style="right:2152px;top:1112.1px;line-height:27px;color:#c8c8c8">0</div>
<div class="t" style="right:2035px;top:1112.1px;line-height:27px;color:#c8c8c8">0</div>
<div class="t" style="right:1611px;top:1112.1px;line-height:27px;color:#c8c8c8">0</div>
<div class="t" style="right:1204px;top:1112.1px;line-height:27px;color:#333">350</div>
<div class="t" style="right:565px;top:1112.1px;line-height:27px;color:#c8c8c8">0</div>
<div class="t" style="right:435px;top:1112.1px;line-height:27px;color:#c8c8c8">0</div>
<div class="t" style="right:305px;top:1112.1px;line-height:27px;color:#c8c8c8">0</div>
<div class="t" style="right:156px;top:1112.1px;line-height:27px;color:#c8c8c8">0</div>
<div class="t" style="right:15px;top:1112.1px;line-height:27px;color:#c8c8c8">0</div>
<div class="b" style="left:0;top:1155px;width:3297px;height:53px;background:#f5f5f5"></div>
<div class="b" style="left:0;top:1207.6px;width:3297px;height:2.6px;background:#e6e6e6"></div>
<div class="t" style="left:15px;top:1167.1px;line-height:27px">Maria Khrenova</div>
<div class="t" style="right:2453px;top:1167.1px;line-height:27px;color:#c8c8c8">0</div>
<div class="t" style="right:2372px;top:1167.1px;line-height:27px;color:#c8c8c8">0</div>
<div class="t" style="right:2291px;top:1167.1px;line-height:27px;color:#c8c8c8">0</div>
<div class="t" style="right:2152px;top:1167.1px;line-height:27px;color:#c8c8c8">0</div>
<div class="t" style="right:2035px;top:1167.1px;line-height:27px;color:#c8c8c8">0</div>
<div class="t" style="right:1611px;top:1167.1px;line-height:27px;color:#c8c8c8">0</div>
<div class="t" style="right:565px;top:1167.1px;line-height:27px;color:#c8c8c8">0</div>
<div class="t" style="right:435px;top:1167.1px;line-height:27px;color:#c8c8c8">0</div>
<div class="t" style="right:305px;top:1167.1px;line-height:27px;color:#c8c8c8">0</div>
<div class="t" style="right:156px;top:1167.1px;line-height:27px;color:#c8c8c8">0</div>
<div class="t" style="right:15px;top:1167.1px;line-height:27px;color:#c8c8c8">0</div>
<div class="b" style="left:0;top:1210px;width:3297px;height:53px;background:#ffffff"></div>
<div class="b" style="left:0;top:1262.6px;width:3297px;height:2.6px;background:#e6e6e6"></div>
<div class="t" style="left:15px;top:1222.1px;line-height:27px">Natalia Krivenkova</div>
<div class="t" style="right:2453px;top:1222.1px;line-height:27px;color:#333">3</div>
<div class="t" style="right:2372px;top:1222.1px;line-height:27px;color:#333">8</div>
<div class="t" style="right:2291px;top:1222.1px;line-height:27px;color:#333">9</div>
<div class="t" style="right:2152px;top:1222.1px;line-height:27px;color:#333">810</div>
<div class="t" style="right:2035px;top:1222.1px;line-height:27px;color:#333">18.00</div>
<div class="t" style="right:1908px;top:1222.1px;line-height:27px;color:#333">10.00</div>
<div class="t" style="right:1778px;top:1222.1px;line-height:27px;color:#333">450.00</div>
<div class="t" style="right:1611px;top:1222.1px;line-height:27px;color:#333">8 100.00</div>
<div class="t" style="right:565px;top:1222.1px;line-height:27px;color:#c8c8c8">0</div>
<div class="t" style="right:435px;top:1222.1px;line-height:27px;color:#333">8 100</div>
<div class="t" style="right:305px;top:1222.1px;line-height:27px;color:#333">8 100</div>
<div class="t" style="right:156px;top:1222.1px;line-height:27px;color:#333">14 900</div>
<div class="t" style="right:15px;top:1222.1px;line-height:27px;color:#333">6 800</div>
<div class="b" style="left:0;top:1265px;width:3297px;height:53px;background:#f5f5f5"></div>
<div class="b" style="left:0;top:1317.6px;width:3297px;height:2.6px;background:#e6e6e6"></div>
<div class="t" style="left:15px;top:1277.1px;line-height:27px">Natalia Spirina</div>
<div class="t" style="right:2453px;top:1277.1px;line-height:27px;color:#333">1</div>
<div class="t" style="right:2372px;top:1277.1px;line-height:27px;color:#333">2</div>
<div class="t" style="right:2291px;top:1277.1px;line-height:27px;color:#c8c8c8">0</div>
<div class="t" style="right:2152px;top:1277.1px;line-height:27px;color:#c8c8c8">0</div>
<div class="t" style="right:2035px;top:1277.1px;line-height:27px;color:#c8c8c8">0</div>
<div class="t" style="right:1611px;top:1277.1px;line-height:27px;color:#c8c8c8">0</div>
<div class="t" style="right:565px;top:1277.1px;line-height:27px;color:#c8c8c8">0</div>
<div class="t" style="right:435px;top:1277.1px;line-height:27px;color:#c8c8c8">0</div>
<div class="t" style="right:305px;top:1277.1px;line-height:27px;color:#c8c8c8">0</div>
<div class="t" style="right:156px;top:1277.1px;line-height:27px;color:#c8c8c8">0</div>
<div class="t" style="right:15px;top:1277.1px;line-height:27px;color:#c8c8c8">0</div>
<div class="b" style="left:0;top:1320px;width:3297px;height:53px;background:#ffffff"></div>
<div class="b" style="left:0;top:1372.6px;width:3297px;height:2.6px;background:#e6e6e6"></div>
<div class="t" style="left:15px;top:1332.1px;line-height:27px">Nizyaeva Olesya</div>
<div class="t" style="right:2453px;top:1332.1px;line-height:27px;color:#333">5</div>
<div class="t" style="right:2372px;top:1332.1px;line-height:27px;color:#333">5</div>
<div class="t" style="right:2291px;top:1332.1px;line-height:27px;color:#333">30</div>
<div class="t" style="right:2152px;top:1332.1px;line-height:27px;color:#333">1 755</div>
<div class="t" style="right:2035px;top:1332.1px;line-height:27px;color:#333">30.00</div>
<div class="t" style="right:1908px;top:1332.1px;line-height:27px;color:#333">5.64</div>
<div class="t" style="right:1778px;top:1332.1px;line-height:27px;color:#333">253.85</div>
<div class="t" style="right:1611px;top:1332.1px;line-height:27px;color:#333">9 000.00</div>
<div class="t" style="right:1471px;top:1332.1px;line-height:27px;color:#333">12 000</div>
<div class="t" style="right:1354px;top:1332.1px;line-height:27px;color:#333">48</div>
<div class="t" style="right:1204px;top:1332.1px;line-height:27px;color:#333">350</div>
<div class="t" style="right:810px;top:1332.1px;line-height:27px;color:#333">1 560</div>
<div class="t" style="right:695px;top:1332.1px;line-height:27px;color:#333">2 400</div>
<div class="t" style="right:565px;top:1332.1px;line-height:27px;color:#333">3 960</div>
<div class="t" style="right:435px;top:1332.1px;line-height:27px;color:#333">10 440</div>
<div class="t" style="right:305px;top:1332.1px;line-height:27px;color:#333">14 400</div>
<div class="t" style="right:156px;top:1332.1px;line-height:27px;color:#333">21 750</div>
<div class="t" style="right:15px;top:1332.1px;line-height:27px;color:#333">7 350</div>
</div>
<div class="b" style="left:3797px;top:481px;width:43px;height:1340px;background:#f1f1f1"></div>
<div class="b" style="left:3800px;top:522px;width:38px;height:1179px;background:#c1c1c1"></div>
<svg style="left:3808px;top:497px" width="22" height="11"><path d="M0 10.5 H22 L11 0 Z" fill="#a3a3a3"/></svg>
<svg style="left:3808px;top:1792px" width="22" height="12"><path d="M0 0 H22 L11 11.5 Z" fill="#505050"/></svg>
<div class="b" style="left:500px;top:1821px;width:3340px;height:3px;background:#d0d0d0"></div>
<div class="b" style="left:500px;top:1824px;width:3340px;height:60px;background:#eeeeee"></div>
<svg style="left:515px;top:1841px" width="26" height="30"><defs><linearGradient id="gd1841" x1="0" y1="0" x2="1" y2="1"><stop offset="0" stop-color="#d2e0f8"/><stop offset="1" stop-color="#7e9fe4"/></linearGradient></defs>
<rect x="0.5" y="0" width="7.5" height="29.5" fill="url(#gd1841)"/><path d="M25.5 0 V27.5 L10 13.5 Z" fill="url(#gd1841)"/></svg>
<svg style="left:573px;top:1841px" width="16" height="28"><path d="M15.5 0 V27.5 L0 13.5 Z" fill="url(#gd1841)"/></svg>
<div class="b" style="left:615px;top:1839px;width:3px;height:35px;background:#cfcfcf"></div>
<div class="t " style="left:638px;top:1844.1px;color:#333;font-size:27px;line-height:27px;">Page</div>
<div class="b" style="left:723px;top:1831px;width:124px;height:46px;background:#fff;border:2px solid #cccccc"></div>
<div class="t " style="left:732px;top:1844.1px;color:#222;font-size:27px;line-height:27px;">1</div>
<div class="t " style="left:862px;top:1844.1px;color:#333;font-size:27px;line-height:27px;">of 2</div>
<div class="b" style="left:930px;top:1839px;width:3px;height:35px;background:#cfcfcf"></div>
<svg style="left:957px;top:1841px" width="16" height="29"><defs><linearGradient id="gn1841" x1="0" y1="0" x2="1" y2="1"><stop offset="0" stop-color="#9ab8fa"/><stop offset="1" stop-color="#1f4fc8"/></linearGradient></defs><path d="M0 0 V28 L15.5 14 Z" fill="url(#gn1841)"/></svg>
<svg style="left:1007px;top:1841px" width="27" height="30"><path d="M0 0 V28 L15.5 14 Z" fill="url(#gn1841)"/><rect x="18" y="0.5" width="7.5" height="29" fill="url(#gn1841)"/></svg>
<div class="b" style="left:1053px;top:1839px;width:3px;height:35px;background:#cfcfcf"></div>
<svg style="left:1070px;top:1838px" width="36" height="36" viewBox="0 0 36 36"><defs><linearGradient id="gr1841" x1="0" y1="0" x2="0" y2="1"><stop offset="0" stop-color="#2d8ef0"/><stop offset="1" stop-color="#9fd0ff"/></linearGradient></defs>
<path d="M6 10 A14 12 0 0 1 29 8 L32 5 L33 19 L20 17 L24 13 A8 7 0 0 0 12 14 Z" fill="url(#gr1841)" stroke="#2a7fe0" stroke-width="0.8"/>
<path d="M30 26 A14 12 0 0 1 7 28 L4 31 L2 17 L16 19 L12 23 A8 7 0 0 0 24 22 Z" fill="url(#gr1841)" stroke="#2a7fe0" stroke-width="0.8"/></svg>
<div class="b" style="left:1120px;top:1839px;width:3px;height:35px;background:#cfcfcf"></div>
<svg style="left:1136px;top:1841px" width="40" height="31" viewBox="0 0 40 31"><defs><linearGradient id="gx1841" x1="0" y1="0" x2="1" y2="1"><stop offset="0" stop-color="#c8f7a8"/><stop offset="0.45" stop-color="#7de04a"/><stop offset="1" stop-color="#3aa818"/></linearGradient></defs>
<path d="M21 0.5 L34.4 0.5 L20.4 24.7 L2.7 24.7 Z" fill="#35a312"/>
<path d="M25 12 L34.5 12.5 L27 19 Z" fill="#3fae1e"/>
<path d="M0 0.5 L12.6 0.5 L38 29.5 L23.3 29.5 Z" fill="url(#gx1841)" stroke="#4aa82a" stroke-width="0.8" stroke-dasharray="1.2 1"/>
</svg>
<div class="t" style="right:28px;top:1844.1px;color:#3c3c3c;font-size:27px;line-height:27px;letter-spacing:0.3px">Displaying 1 - 25 of 35</div>
<div class="b" style="left:750px;top:746px;width:2684px;height:750px;background:#36b8f3;box-shadow:3px 9px 16px rgba(0,0,0,0.24);border:3px solid #2eaae3"></div>
<div class="b" style="left:760px;top:806px;width:2665px;height:679px;background:#fff"></div>
<svg style="left:760px;top:759px" width="37" height="33" viewBox="0 0 37 33">
<rect x="0" y="0" width="36" height="32" rx="1" fill="#6f98d6"/>
<rect x="1" y="0.8" width="34" height="6.5" fill="#93b6ea"/>
<rect x="2.5" y="7.5" width="32" height="22.5" fill="#fbfcfe"/>
<g fill="#bdbdbd"><rect x="5.3" y="10.5" width="7" height="2.5" rx="1"/><rect x="15.2" y="10.5" width="7" height="2.5" rx="1"/><rect x="25.2" y="10.5" width="7" height="2.5" rx="1" fill="#aaa"/>
<rect x="5.3" y="15.4" width="7" height="2.5" rx="1"/><rect x="15.2" y="15.4" width="7" height="2.5" rx="1"/><rect x="25.2" y="15.4" width="7" height="2.5" rx="1" fill="#aaa"/>
<rect x="5.3" y="20.4" width="7" height="2.5" rx="1"/><rect x="15.2" y="20.4" width="7" height="2.5" rx="1"/><rect x="25.2" y="20.4" width="7" height="2.5" rx="1" fill="#aaa"/>
<rect x="5.3" y="25.4" width="7" height="2.5" rx="1"/><rect x="15.2" y="25.4" width="7" height="2.5" rx="1"/><rect x="25.2" y="25.4" width="7" height="2.5" rx="1" fill="#a0a0a0"/></g>
</svg>
<div class="t " style="left:811px;top:765.1px;color:#f2f8fc;font-size:27px;line-height:27px;">By groups</div>
<svg style="left:3270px;top:746px" width="160" height="60">
<circle cx="25" cy="30" r="20" fill="#d9f1fc"/><rect x="12.5" y="27.5" width="25" height="5" fill="#36b8f3"/>
<circle cx="80" cy="30" r="20" fill="#d9f1fc"/><path d="M66.5 21 V36 H81.5 Z" fill="#36b8f3"/><path d="M73 16.5 H88 V31.5 Z" fill="#36b8f3"/>
<circle cx="135" cy="30" r="20" fill="#d9f1fc"/><path d="M124.5 19.5 L145.5 40.5 M145.5 19.5 L124.5 40.5" stroke="#36b8f3" stroke-width="4.5"/>
</svg>
<svg style="left:776px;top:823px" width="34" height="33" viewBox="0 0 34 33">
<path d="M25.8 0.8 L32.2 7.2 L8.7 30.7 L2 31.5 L2.3 24.3 Z" fill="#86e070" stroke="#4f9e40" stroke-width="1.3" stroke-dasharray="1.6 1.2" stroke-linejoin="round"/>
<path d="M2 31.6 L2.4 26.5 L6.8 31 Z" fill="#111"/>
</svg>
<div class="b" style="left:830px;top:821px;width:3px;height:35px;background:#cccccc"></div>
<div class="b" style="left:3168px;top:815px;width:250px;height:48px;background:#fff;border:2px solid #d0d0d0"></div>
<div class="t " style="left:3175px;top:826.6px;color:#777;font-size:27px;line-height:27px;">Search...</div>
<div class="b" style="left:760px;top:871px;width:2665px;height:2px;background:#cccccc"></div>
<div class="b" style="left:760px;top:873px;width:2665px;height:109px;background:#eeeeee"></div>
<div class="b" style="left:760px;top:982px;width:2665px;height:2px;background:#cccccc"></div>
<div class="b" style="left:1500px;top:873px;width:2.5px;height:109px;background:#d0d0d0"></div>
<div class="b" style="left:2317px;top:873px;width:2.5px;height:109px;background:#d0d0d0"></div>
<div class="b" style="left:2666px;top:873px;width:2.5px;height:109px;background:#d0d0d0"></div>
<div class="b" style="left:2852px;top:873px;width:2.5px;height:109px;background:#d0d0d0"></div>
<div class="b" style="left:3122px;top:873px;width:2.5px;height:109px;background:#d0d0d0"></div>
<div class="b" style="left:3292px;top:873px;width:2.5px;height:109px;background:#d0d0d0"></div>
<div class="b" style="left:1580px;top:928px;width:2.5px;height:50px;background:#d0d0d0"></div>
<div class="b" style="left:1732px;top:928px;width:2.5px;height:50px;background:#d0d0d0"></div>
<div class="b" style="left:2047px;top:928px;width:2.5px;height:50px;background:#d0d0d0"></div>
<div class="b" style="left:2397px;top:928px;width:2.5px;height:50px;background:#d0d0d0"></div>
<div class="b" style="left:2495px;top:928px;width:2.5px;height:50px;background:#d0d0d0"></div>
<div class="b" style="left:2572px;top:928px;width:2.5px;height:50px;background:#d0d0d0"></div>
<div class="b" style="left:2752px;top:928px;width:2.5px;height:50px;background:#d0d0d0"></div>
<div class="b" style="left:2955px;top:928px;width:2.5px;height:50px;background:#d0d0d0"></div>
<div class="b" style="left:1501px;top:925px;width:817px;height:3px;background:#d0d0d0"></div>
<div class="b" style="left:2318px;top:925px;width:349px;height:3px;background:#d0d0d0"></div>
<div class="b" style="left:2667px;top:925px;width:186px;height:3px;background:#d0d0d0"></div>
<div class="b" style="left:2853px;top:925px;width:270px;height:3px;background:#d0d0d0"></div>
<div class="t " style="left:776px;top:913.1px;color:#333;font-size:27px;line-height:27px;">Group</div>
<svg style="left:861px;top:920px" width="23" height="13"><path d="M0 12.5 H23 L11.5 0 Z" fill="#9a9a9a"/></svg>
<div class="t" style="left:1612.5px;width:600px;text-align:center;top:886.1px;color:#333;font-size:27px;line-height:27px;">Training</div>
<div class="t" style="left:2195.5px;width:600px;text-align:center;top:886.1px;color:#333;font-size:27px;line-height:27px;">Statistics</div>
<div class="t" style="left:2463.0px;width:600px;text-align:center;top:886.1px;color:#333;font-size:27px;line-height:27px;">Spoofs</div>
<div class="t" style="left:2691.0px;width:600px;text-align:center;top:886.1px;color:#333;font-size:27px;line-height:27px;">Accruals</div>
<div class="t " style="left:1517.5px;top:941.1px;color:#333;font-size:27px;line-height:27px;"><span class="u">SQ</span></div>
<div class="t " style="left:1597.5px;top:941.1px;color:#1010f0;font-size:27px;line-height:27px;"><span class="">Level</span></div>
<div class="t " style="left:1749.5px;top:941.1px;color:#333;font-size:27px;line-height:27px;"><span class="">Course / Coursebook</span></div>
<div class="t " style="left:2064.5px;top:941.1px;color:#333;font-size:27px;line-height:27px;"><span class="">Place</span></div>
<div class="t " style="left:2334.5px;top:941.1px;color:#333;font-size:27px;line-height:27px;"><span class="u">LQ</span></div>
<div class="t " style="left:2414.5px;top:941.1px;color:#333;font-size:27px;line-height:27px;"><span class="u">PAQ</span></div>
<div class="t " style="left:2512.5px;top:941.1px;color:#1010f0;font-size:27px;line-height:27px;"><span class="u">LD</span></div>
<div class="t " style="left:2589.5px;top:941.1px;color:#333;font-size:27px;line-height:27px;"><span class="u">%</span></div>
<div class="t " style="left:2683.5px;top:941.1px;color:#333;font-size:27px;line-height:27px;"><span class="u">Qty</span></div>
<div class="t " style="left:2769.5px;top:941.1px;color:#333;font-size:27px;line-height:27px;"><span class="u">Sum</span></div>
<div class="t " style="left:2869.5px;top:941.1px;color:#1010f0;font-size:27px;line-height:27px;"><span class="u">Rate</span></div>
<div class="t " style="left:2972.5px;top:941.1px;color:#333;font-size:27px;line-height:27px;"><span class="">Accrued</span></div>
<div class="t " style="left:3151px;top:896.1px;color:#333;font-size:27px;line-height:27px;"><span class="u">Fixed gain</span></div>
<div class="t " style="left:3151px;top:931.1px;color:#333;font-size:27px;line-height:27px;"><span class="u">per lesson</span></div>
<div class="t " style="left:3310px;top:913.1px;color:#333;font-size:27px;line-height:27px;">Gain</div>
<div class="b" style="left:760px;top:984.0px;width:2665px;height:53.2px;background:#ffffff"></div>
<div class="b" style="left:760px;top:1036.8px;width:2665px;height:2.6px;background:#e6e6e6"></div>
<svg style="left:777px;top:993.0px" width="36" height="32" viewBox="0 0 36 32">
<path d="M1 6 H10.5 V21 H25.5 V6 H35 V31 H1 Z" fill="#80ef80" stroke="#3cd23c" stroke-width="1.5"/>
<rect x="13" y="0.5" width="10" height="17.5" fill="#a9a9a9" stroke="#8a8a8a" stroke-width="1"/>
</svg>
<div class="t " style="left:814px;top:996.1px;color:#333;font-size:27px;line-height:27px;">Elementary 1 MON 10:30'90, WED 10:30'90</div>
<div class="t" style="right:2271px;top:996.1px;color:#333;font-size:27px;line-height:27px;">3</div>
<div class="t " style="left:1598px;top:996.1px;color:#333;font-size:27px;line-height:27px;">Beginner</div>
<div class="t " style="left:2067px;top:996.1px;color:#333;font-size:27px;line-height:27px;">st. Piskunova 21/2</div>
<div class="t" style="right:1452px;top:996.1px;color:#333;font-size:27px;line-height:27px;">8</div>
<div class="t" style="right:1355px;top:996.1px;color:#333;font-size:27px;line-height:27px;">16</div>
<div class="t" style="right:1279px;top:996.1px;color:#333;font-size:27px;line-height:27px;">60</div>
<div class="t" style="right:1186px;top:996.1px;color:#ee1111;font-size:27px;line-height:27px;">60</div>
<div class="t" style="right:1099px;top:996.1px;color:#c8c8c8;font-size:27px;line-height:27px;">0</div>
<div class="t" style="right:999px;top:996.1px;color:#c8c8c8;font-size:27px;line-height:27px;">0</div>
<div class="t" style="right:897px;top:996.1px;color:#333;font-size:27px;line-height:27px;">800</div>
<div class="t" style="right:731px;top:996.1px;color:#333;font-size:27px;line-height:27px;">6 400.00</div>
<div class="t" style="right:560px;top:996.1px;color:#c8c8c8;font-size:27px;line-height:27px;">0</div>
<div class="t" style="right:430px;top:996.1px;color:#333;font-size:27px;line-height:27px;">11 186</div>
<div class="b" style="left:760px;top:1039.2px;width:2665px;height:53.2px;background:#f5f5f5"></div>
<div class="b" style="left:760px;top:1092.0px;width:2665px;height:2.6px;background:#e6e6e6"></div>
<svg style="left:777px;top:1048.2px" width="36" height="32" viewBox="0 0 36 32">
<path d="M1 6 H10.5 V21 H25.5 V6 H35 V31 H1 Z" fill="#80ef80" stroke="#3cd23c" stroke-width="1.5"/>
<rect x="13" y="0.5" width="10" height="17.5" fill="#f27b6b" stroke="#e0553f" stroke-width="1"/>
</svg>
<div class="t " style="left:814px;top:1051.3px;color:#333;font-size:27px;line-height:27px;">Gateway B1 + WED 15:30'90</div>
<div class="t" style="right:2271px;top:1051.3px;color:#333;font-size:27px;line-height:27px;">5</div>
<div class="t " style="left:1598px;top:1051.3px;color:#333;font-size:27px;line-height:27px;">Beginner</div>
<div class="t " style="left:1751px;top:1051.3px;color:#333;font-size:27px;line-height:27px;">Spoken English</div>
<div class="t " style="left:2067px;top:1051.3px;color:#333;font-size:27px;line-height:27px;">st. Piskunova 21/2</div>
<div class="t" style="right:1452px;top:1051.3px;color:#333;font-size:27px;line-height:27px;">4</div>
<div class="t" style="right:1355px;top:1051.3px;color:#333;font-size:27px;line-height:27px;">7</div>
<div class="t" style="right:1279px;top:1051.3px;color:#333;font-size:27px;line-height:27px;">90</div>
<div class="t" style="right:1186px;top:1051.3px;color:#ee1111;font-size:27px;line-height:27px;">35</div>
<div class="t" style="right:1099px;top:1051.3px;color:#c8c8c8;font-size:27px;line-height:27px;">0</div>
<div class="t" style="right:999px;top:1051.3px;color:#c8c8c8;font-size:27px;line-height:27px;">0</div>
<div class="t" style="right:897px;top:1051.3px;color:#333;font-size:27px;line-height:27px;">800</div>
<div class="t" style="right:731px;top:1051.3px;color:#333;font-size:27px;line-height:27px;">3 200.00</div>
<div class="t" style="right:560px;top:1051.3px;color:#c8c8c8;font-size:27px;line-height:27px;">0</div>
<div class="t" style="right:430px;top:1051.3px;color:#333;font-size:27px;line-height:27px;">4 152</div>
<div class="b" style="left:760px;top:1094.4px;width:2665px;height:53.2px;background:#ffffff"></div>
<div class="b" style="left:760px;top:1147.2px;width:2665px;height:2.6px;background:#e6e6e6"></div>
<svg style="left:777px;top:1103.4px" width="36" height="32" viewBox="0 0 36 32">
<path d="M1 6 H10.5 V21 H25.5 V6 H35 V31 H1 Z" fill="#80ef80" stroke="#3cd23c" stroke-width="1.5"/>
<rect x="13" y="0.5" width="10" height="17.5" fill="#a9a9a9" stroke="#8a8a8a" stroke-width="1"/>
</svg>
<div class="t " style="left:814px;top:1106.5px;color:#333;font-size:27px;line-height:27px;">Unified State Exam MON 15:30'90, THU 16:00'90</div>
<div class="t" style="right:2271px;top:1106.5px;color:#333;font-size:27px;line-height:27px;">3</div>
<div class="t " style="left:1598px;top:1106.5px;color:#333;font-size:27px;line-height:27px;">Beginner</div>
<div class="t " style="left:1751px;top:1106.5px;color:#333;font-size:27px;line-height:27px;">Preparation for exams</div>
<div class="t " style="left:2067px;top:1106.5px;color:#333;font-size:27px;line-height:27px;">st. Piskunova 21/2</div>
<div class="t" style="right:1452px;top:1106.5px;color:#333;font-size:27px;line-height:27px;">9</div>
<div class="t" style="right:1355px;top:1106.5px;color:#333;font-size:27px;line-height:27px;">12</div>
<div class="t" style="right:1279px;top:1106.5px;color:#333;font-size:27px;line-height:27px;">90</div>
<div class="t" style="right:1186px;top:1106.5px;color:#ee1111;font-size:27px;line-height:27px;">45</div>
<div class="t" style="right:1099px;top:1106.5px;color:#c8c8c8;font-size:27px;line-height:27px;">0</div>
<div class="t" style="right:999px;top:1106.5px;color:#c8c8c8;font-size:27px;line-height:27px;">0</div>
<div class="t" style="right:897px;top:1106.5px;color:#333;font-size:27px;line-height:27px;">800</div>
<div class="t" style="right:731px;top:1106.5px;color:#333;font-size:27px;line-height:27px;">7 200.00</div>
<div class="t" style="right:560px;top:1106.5px;color:#c8c8c8;font-size:27px;line-height:27px;">0</div>
<div class="t" style="right:430px;top:1106.5px;color:#333;font-size:27px;line-height:27px;">4 410</div>
<div class="b" style="left:760px;top:1149.6px;width:2665px;height:53.2px;background:#f5f5f5"></div>
<div class="b" style="left:760px;top:1202.4px;width:2665px;height:2.6px;background:#e6e6e6"></div>
<svg style="left:777px;top:1158.6px" width="36" height="32" viewBox="0 0 36 32">
<path d="M1 6 H10.5 V21 H25.5 V6 H35 V31 H1 Z" fill="#80ef80" stroke="#3cd23c" stroke-width="1.5"/>
<rect x="13" y="0.5" width="10" height="17.5" fill="#f27b6b" stroke="#e0553f" stroke-width="1"/>
</svg>
<div class="t " style="left:814px;top:1161.7px;color:#333;font-size:27px;line-height:27px;">Indus - Evgeniya Sutyrina TUE 15:00'60, FRI 14:00'60</div>
<div class="t" style="right:2271px;top:1161.7px;color:#333;font-size:27px;line-height:27px;">1</div>
<div class="t " style="left:1598px;top:1161.7px;color:#333;font-size:27px;line-height:27px;">Beginner</div>
<div class="t " style="left:2067px;top:1161.7px;color:#333;font-size:27px;line-height:27px;">st. Piskunova 21/2</div>
<div class="t" style="right:1452px;top:1161.7px;color:#333;font-size:27px;line-height:27px;">7</div>
<div class="t" style="right:1355px;top:1161.7px;color:#333;font-size:27px;line-height:27px;">7</div>
<div class="t" style="right:1279px;top:1161.7px;color:#333;font-size:27px;line-height:27px;">60</div>
<div class="t" style="right:1186px;top:1161.7px;color:#ee1111;font-size:27px;line-height:27px;">78</div>
<div class="t" style="right:1099px;top:1161.7px;color:#c8c8c8;font-size:27px;line-height:27px;">0</div>
<div class="t" style="right:999px;top:1161.7px;color:#c8c8c8;font-size:27px;line-height:27px;">0</div>
<div class="t" style="right:897px;top:1161.7px;color:#333;font-size:27px;line-height:27px;">500</div>
<div class="t" style="right:731px;top:1161.7px;color:#333;font-size:27px;line-height:27px;">3 500.00</div>
<div class="t" style="right:560px;top:1161.7px;color:#c8c8c8;font-size:27px;line-height:27px;">0</div>
<div class="t" style="right:430px;top:1161.7px;color:#333;font-size:27px;line-height:27px;">4 900</div>
<div class="b" style="left:760px;top:1204.8px;width:2665px;height:53.2px;background:#ffffff"></div>
<div class="b" style="left:760px;top:1257.6px;width:2665px;height:2.6px;background:#e6e6e6"></div>
<svg style="left:777px;top:1213.8px" width="36" height="32" viewBox="0 0 36 32">
<path d="M1 6 H10.5 V21 H25.5 V6 H35 V31 H1 Z" fill="#80ef80" stroke="#3cd23c" stroke-width="1.5"/>
<rect x="13" y="0.5" width="10" height="17.5" fill="#f27b6b" stroke="#e0553f" stroke-width="1"/>
</svg>
<div class="t " style="left:814px;top:1216.9px;color:#333;font-size:27px;line-height:27px;">Indus - Elena Pshenitsyna THU 18:00'60, SAT 10:00'60</div>
<div class="t" style="right:2271px;top:1216.9px;color:#333;font-size:27px;line-height:27px;">1</div>
<div class="t " style="left:1598px;top:1216.9px;color:#333;font-size:27px;line-height:27px;">Beginner</div>
<div class="t " style="left:2067px;top:1216.9px;color:#333;font-size:27px;line-height:27px;">st. Piskunova 21/2</div>
<div class="t" style="right:1452px;top:1216.9px;color:#333;font-size:27px;line-height:27px;">8</div>
<div class="t" style="right:1355px;top:1216.9px;color:#333;font-size:27px;line-height:27px;">8</div>
<div class="t" style="right:1279px;top:1216.9px;color:#333;font-size:27px;line-height:27px;">60</div>
<div class="t" style="right:1186px;top:1216.9px;color:#22bb22;font-size:27px;line-height:27px;">100</div>
<div class="t" style="right:1099px;top:1216.9px;color:#c8c8c8;font-size:27px;line-height:27px;">0</div>
<div class="t" style="right:999px;top:1216.9px;color:#c8c8c8;font-size:27px;line-height:27px;">0</div>
<div class="t" style="right:897px;top:1216.9px;color:#333;font-size:27px;line-height:27px;">500</div>
<div class="t" style="right:731px;top:1216.9px;color:#333;font-size:27px;line-height:27px;">4 000.00</div>
<div class="t" style="right:560px;top:1216.9px;color:#c8c8c8;font-size:27px;line-height:27px;">0</div>
<div class="t" style="right:430px;top:1216.9px;color:#333;font-size:27px;line-height:27px;">5 600</div>
<div class="b" style="left:760px;top:1260.0px;width:2665px;height:53.2px;background:#f5f5f5"></div>
<div class="b" style="left:760px;top:1312.8px;width:2665px;height:2.6px;background:#e6e6e6"></div>
<svg style="left:777px;top:1269.0px" width="36" height="32" viewBox="0 0 36 32">
<path d="M1 6 H10.5 V21 H25.5 V6 H35 V31 H1 Z" fill="#80ef80" stroke="#3cd23c" stroke-width="1.5"/>
<rect x="13" y="0.5" width="10" height="17.5" fill="#f27b6b" stroke="#e0553f" stroke-width="1"/>
</svg>
<div class="t " style="left:814px;top:1272.1px;color:#333;font-size:27px;line-height:27px;">Indus - Klimov Alexander TUE 10:00'60, FRI 15:00'60</div>
<div class="t" style="right:2271px;top:1272.1px;color:#333;font-size:27px;line-height:27px;">1</div>
<div class="t " style="left:1598px;top:1272.1px;color:#333;font-size:27px;line-height:27px;">Beginner</div>
<div class="t " style="left:2067px;top:1272.1px;color:#333;font-size:27px;line-height:27px;">st. Piskunova 21/2</div>
<div class="t" style="right:1452px;top:1272.1px;color:#333;font-size:27px;line-height:27px;">2</div>
<div class="t" style="right:1355px;top:1272.1px;color:#333;font-size:27px;line-height:27px;">2</div>
<div class="t" style="right:1279px;top:1272.1px;color:#333;font-size:27px;line-height:27px;">60</div>
<div class="t" style="right:1186px;top:1272.1px;color:#ee1111;font-size:27px;line-height:27px;">23</div>
<div class="t" style="right:1099px;top:1272.1px;color:#c8c8c8;font-size:27px;line-height:27px;">0</div>
<div class="t" style="right:999px;top:1272.1px;color:#c8c8c8;font-size:27px;line-height:27px;">0</div>
<div class="t" style="right:897px;top:1272.1px;color:#333;font-size:27px;line-height:27px;">500</div>
<div class="t" style="right:731px;top:1272.1px;color:#333;font-size:27px;line-height:27px;">1 000.00</div>
<div class="t" style="right:560px;top:1272.1px;color:#c8c8c8;font-size:27px;line-height:27px;">0</div>
<div class="t" style="right:430px;top:1272.1px;color:#333;font-size:27px;line-height:27px;">1 500</div>
<div class="t" style="right:2271px;top:1326.3px;color:#333;font-size:27px;line-height:27px;">14</div>
<div class="t" style="right:1452px;top:1326.3px;color:#333;font-size:27px;line-height:27px;">38</div>
<div class="t" style="right:1186px;top:1326.3px;color:#ee1111;font-size:27px;line-height:27px;">56</div>
<div class="t" style="right:731px;top:1326.3px;color:#333;font-size:27px;line-height:27px;">25 300.00</div>
<div class="t" style="right:430px;top:1326.3px;color:#333;font-size:27px;line-height:27px;">31 748</div>
<div class="b" style="left:760px;top:1421px;width:2665px;height:2px;background:#d0d0d0"></div>
<div class="b" style="left:760px;top:1423px;width:2665px;height:62px;background:#eeeeee"></div>
<svg style="left:774px;top:1442px" width="26" height="30"><defs><linearGradient id="gd1442" x1="0" y1="0" x2="1" y2="1"><stop offset="0" stop-color="#d2e0f8"/><stop offset="1" stop-color="#7e9fe4"/></linearGradient></defs>
<rect x="0.5" y="0" width="7.5" height="29.5" fill="url(#gd1442)"/><path d="M25.5 0 V27.5 L10 13.5 Z" fill="url(#gd1442)"/></svg>
<svg style="left:832px;top:1442px" width="16" height="28"><path d="M15.5 0 V27.5 L0 13.5 Z" fill="url(#gd1442)"/></svg>
<div class="b" style="left:874px;top:1440px;width:3px;height:35px;background:#cfcfcf"></div>
<div class="t " style="left:898px;top:1445.1px;color:#333;font-size:27px;line-height:27px;">Page</div>
<div class="b" style="left:983px;top:1432px;width:124px;height:46px;background:#fff;border:2px solid #cccccc"></div>
<div class="t " style="left:992px;top:1445.1px;color:#222;font-size:27px;line-height:27px;">1</div>
<div class="t " style="left:1123px;top:1445.1px;color:#333;font-size:27px;line-height:27px;">of 1</div>
<div class="b" style="left:1190px;top:1440px;width:3px;height:35px;background:#cfcfcf"></div>
<svg style="left:1217px;top:1442px" width="16" height="29"><defs><linearGradient id="gn1442" x1="0" y1="0" x2="1" y2="1"><stop offset="0" stop-color="#9ab8fa"/><stop offset="1" stop-color="#1f4fc8"/></linearGradient></defs><path d="M0 0 V28 L15.5 14 Z" fill="url(#gn1442)"/></svg>
<svg style="left:1266px;top:1442px" width="27" height="30"><path d="M0 0 V28 L15.5 14 Z" fill="url(#gn1442)"/><rect x="18" y="0.5" width="7.5" height="29" fill="url(#gn1442)"/></svg>
<div class="b" style="left:1312px;top:1440px;width:3px;height:35px;background:#cfcfcf"></div>
<svg style="left:1329px;top:1439px" width="36" height="36" viewBox="0 0 36 36"><defs><linearGradient id="gr1442" x1="0" y1="0" x2="0" y2="1"><stop offset="0" stop-color="#2d8ef0"/><stop offset="1" stop-color="#9fd0ff"/></linearGradient></defs>
<path d="M6 10 A14 12 0 0 1 29 8 L32 5 L33 19 L20 17 L24 13 A8 7 0 0 0 12 14 Z" fill="url(#gr1442)" stroke="#2a7fe0" stroke-width="0.8"/>
<path d="M30 26 A14 12 0 0 1 7 28 L4 31 L2 17 L16 19 L12 23 A8 7 0 0 0 24 22 Z" fill="url(#gr1442)" stroke="#2a7fe0" stroke-width="0.8"/></svg>
<div class="b" style="left:1380px;top:1440px;width:3px;height:35px;background:#cfcfcf"></div>
<svg style="left:1396px;top:1442px" width="40" height="31" viewBox="0 0 40 31"><defs><linearGradient id="gx1442" x1="0" y1="0" x2="1" y2="1"><stop offset="0" stop-color="#c8f7a8"/><stop offset="0.45" stop-color="#7de04a"/><stop offset="1" stop-color="#3aa818"/></linearGradient></defs>
<path d="M21 0.5 L34.4 0.5 L20.4 24.7 L2.7 24.7 Z" fill="#35a312"/>
<path d="M25 12 L34.5 12.5 L27 19 Z" fill="#3fae1e"/>
<path d="M0 0.5 L12.6 0.5 L38 29.5 L23.3 29.5 Z" fill="url(#gx1442)" stroke="#4aa82a" stroke-width="0.8" stroke-dasharray="1.2 1"/>
</svg>
<div class="t" style="right:442px;top:1445.1px;color:#3c3c3c;font-size:27px;line-height:27px;letter-spacing:0.3px">Displaying 1 - 6 of 6</div>
<svg style="left:0;top:0;filter:drop-shadow(4px 5px 3px rgba(0,0,0,0.85))" width="3840" height="1884">
<rect x="494" y="963.5" width="235" height="66" fill="none" stroke="#fd5a4b" stroke-width="10"/>
</svg>
<div class="b" style="left:583px;top:314px;width:148px;height:42px;background:#2e87b2;box-shadow:inset 4px 4px 5px rgba(0,0,0,0.55)"></div>
<div class="t " style="left:596px;top:325.1px;color:#f4f8fb;font-size:27px;line-height:27px;">By groups</div>
<svg style="left:0;top:0;filter:drop-shadow(4px 5px 3px rgba(0,0,0,0.85))" width="3840" height="1884">
<rect x="578" y="309" width="158" height="52" fill="none" stroke="#fd5a4b" stroke-width="10"/>
<path d="M602 926.3 L641.8 414.5 L626.5 416 L650.8 381.5 L669.8 419.5 L654.8 415.5 L622 927.7 A10 10 0 0 1 602 926.3 Z" fill="#fd5a4b" stroke="#fd5a4b" stroke-width="5" stroke-linejoin="round"/>
<path d="M687.7 403.1 L755.7 681.3 L739.5 681.5 L768.8 712.5 L782.5 673 L767.3 678.5 L706.3 398.9 A9.5 9.5 0 0 0 687.7 403.1 Z" fill="#fd5a4b" stroke="#fd5a4b" stroke-width="5" stroke-linejoin="round"/>
</svg>
</body></html>
